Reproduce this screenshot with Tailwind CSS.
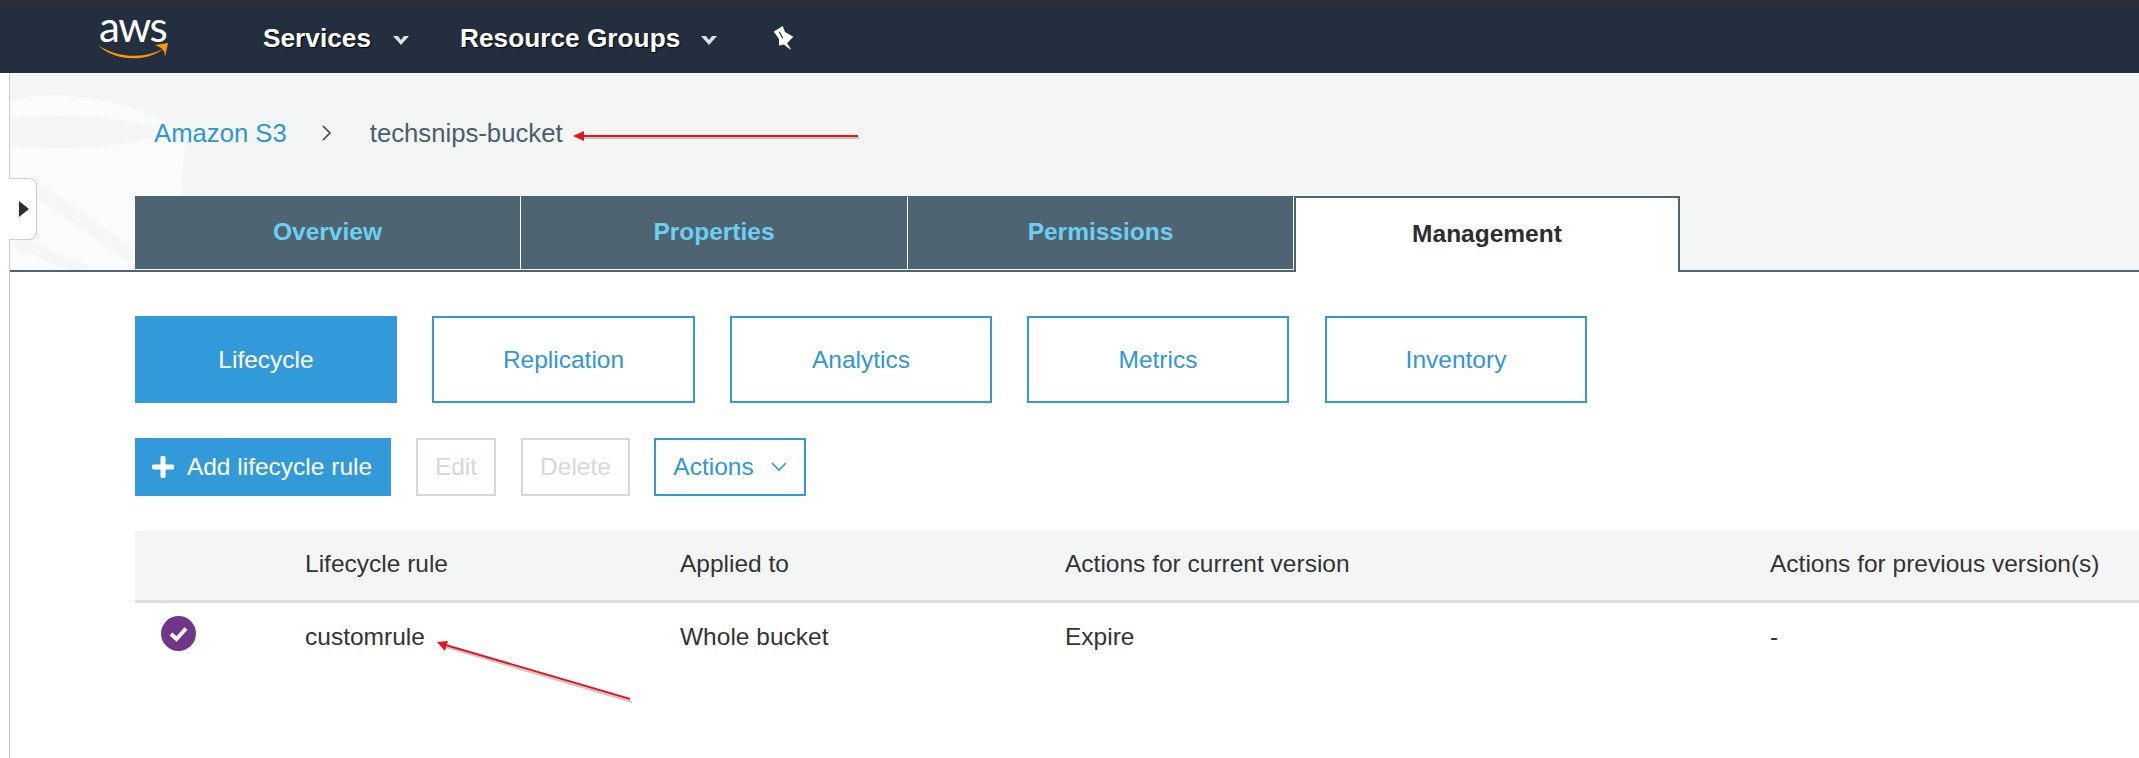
<!DOCTYPE html>
<html>
<head>
  <meta charset="UTF-8">
  <meta name="viewport" content="width=device-width, initial-scale=1.0">
  <script src="https://cdn.jsdelivr.net/npm/@tailwindcss/browser@4"></script>
  <title>techsnips-bucket - S3</title>
</head>
<body class="bg-white">
  <div class="relative w-[2139px] h-[758px] overflow-hidden flex flex-col bg-white font-['Liberation_Sans',Arial,sans-serif] text-[#333]">

    <!-- top nav -->
    <header class="h-[73px] shrink-0 flex items-center bg-[#232f3e] border-t-[3px] border-[#2f2f2f] text-white">
      <div class="relative w-[72px] h-[44px] ml-[97px]">
        <span class="absolute left-[2px] top-[-20px] font-['Lato',sans-serif] text-[42px] leading-[60px] tracking-[-1.5px]">aws</span>
        <svg class="absolute left-0 top-[26px]" width="72" height="19" viewBox="0 0 72 19">
          <path d="M1 3 C 18 15, 44 18, 66 7 C 50 20, 18 20, 1 3 Z" fill="#f90"/>
          <path d="M58 3 L71 1 L68 15 C 68 9, 66 6, 58 3 Z" fill="#f90"/>
        </svg>
      </div>
      <nav class="flex items-center font-bold text-[26.25px] [text-shadow:1px_1px_1px_#000]">
        <span class="ml-[94px] mt-px">Services</span>
        <svg class="ml-[22px] mt-[5px]" width="16" height="9" viewBox="0 0 16 9"><path d="M0 0 H5 L8 4 L11 0 H16 L8 9 Z" fill="#dfe2e2"/></svg>
        <span class="ml-[51px] mt-px">Resource Groups</span>
        <svg class="ml-[21px] mt-[5px]" width="16" height="9" viewBox="0 0 16 9"><path d="M0 0 H5 L8 4 L11 0 H16 L8 9 Z" fill="#dfe2e2"/></svg>
        <svg class="ml-[56px]" width="22" height="26" viewBox="0 0 22 26">
          <path d="M0.7 6.7 L9.7 1 L12 7 L20.3 11.7 L14 18.3 L18 24.3 L17 24.5 L11 19.5 L6 20.5 L6 14 L1 7 Z" fill="#fff"/>
          <path d="M6.3 6.7 L9.7 13.3" stroke="#232f3e" stroke-width="1.2"/>
        </svg>
      </nav>
    </header>

    <div class="flex-1 ml-[9px] border-l border-[#ccc] flex flex-col">
      <!-- bucket header -->
      <section class="relative h-[199px] shrink-0 bg-[#f4f6f6] flex flex-col overflow-hidden">
        <svg class="absolute left-0 top-0" width="200" height="199" viewBox="0 0 200 199">
          <path d="M0 27 C 30 20, 70 22, 100 29 C 140 38, 165 52, 175 70 L 165 199 L 0 199 Z" fill="#fafbfb"/>
          <ellipse cx="50" cy="59" rx="95" ry="16" fill="#f4f6f6"/>
          <path d="M25 115 L 125 185" stroke="#f5f6f6" stroke-width="14"/>
          <path d="M5 168 L 75 198" stroke="#f5f6f6" stroke-width="12"/>
        </svg>
        <div class="relative h-[123px] flex items-center text-[25.7px] pb-[3px] pl-[144px]">
          <a class="text-[#2f97d6]">Amazon S3</a>
          <svg class="ml-[34px]" width="12" height="18" viewBox="0 0 12 18"><path d="M2 2 L9 9 L2 16" fill="none" stroke="#444" stroke-width="1.6"/></svg>
          <span class="ml-[37px] text-[#485e6d]">techsnips-bucket</span>
        </div>
        <div class="relative flex-1 flex items-stretch pl-[125px] border-b-2 border-[#4f6473] font-bold text-[24.5px]">
          <div class="w-[386px] mb-px flex items-center justify-center bg-[#4f6473] text-[#6bd0ef] border-r border-white">Overview</div>
          <div class="w-[387px] mb-px flex items-center justify-center bg-[#4f6473] text-[#6bd0ef] border-r border-white">Properties</div>
          <div class="w-[386px] mb-px flex items-center justify-center bg-[#4f6473] text-[#6bd0ef] border-r border-white">Permissions</div>
          <div class="w-[386px] -mb-[2px] pb-[2px] flex items-center justify-center bg-white text-[#2d2d2d] border-2 border-b-0 border-[#4f6473]">Management</div>
        </div>
      </section>

      <!-- sub tabs -->
      <div class="flex pl-[125px] pt-[44px] gap-[35px] text-[24.5px] text-[#2f97d6]">
        <div class="w-[262px] h-[87px] pt-[2px] flex items-center justify-center bg-[#339ad9] text-white">Lifecycle</div>
        <div class="w-[263px] h-[87px] pt-[2px] flex items-center justify-center border-2 border-[#339ad9]">Replication</div>
        <div class="w-[262px] h-[87px] pt-[2px] flex items-center justify-center border-2 border-[#339ad9]">Analytics</div>
        <div class="w-[262px] h-[87px] pt-[2px] flex items-center justify-center border-2 border-[#339ad9]">Metrics</div>
        <div class="w-[262px] h-[87px] pt-[2px] ml-px flex items-center justify-center border-2 border-[#339ad9]">Inventory</div>
      </div>

      <!-- toolbar -->
      <div class="flex items-center pl-[125px] mt-[35px] text-[24.5px]">
        <button class="w-[256px] h-[58px] pr-[2px] flex items-center justify-center gap-[13px] bg-[#339ad9] text-white">
          <svg width="22" height="22" viewBox="0 0 22 22"><path d="M11 2 V20 M2 11 H20" stroke="#fff" stroke-width="5" stroke-linecap="round"/></svg>
          <span>Add lifecycle rule</span>
        </button>
        <button class="ml-[25px] w-[80px] h-[58px] flex items-center justify-center border-2 border-[#d5d8d8] text-[#d5d8d8]">Edit</button>
        <button class="ml-[25px] w-[109px] h-[58px] flex items-center justify-center border-2 border-[#d5d8d8] text-[#d5d8d8]">Delete</button>
        <button class="ml-[24px] w-[152px] h-[58px] flex items-center justify-center gap-[17px] border-2 border-[#339ad9] text-[#2f97d6]">
          <span>Actions</span>
          <svg width="16" height="10" viewBox="0 0 16 10"><path d="M1 1 L8 8 L15 1" fill="none" stroke="#2f97d6" stroke-width="1.6"/></svg>
        </button>
      </div>

      <!-- rules table -->
      <div class="ml-[125px] mt-[35px] text-[24.5px] text-[#333]">
        <div class="h-[72px] pb-[2px] grid grid-cols-[170px_375px_385px_705px_1fr] items-center bg-[#f4f6f6] border-b-[3px] border-[#ddd]">
          <span></span>
          <span>Lifecycle rule</span>
          <span>Applied to</span>
          <span>Actions for current version</span>
          <span>Actions for previous version(s)</span>
        </div>
        <div class="h-[70px] pb-[2px] grid grid-cols-[170px_375px_385px_705px_1fr] items-center">
          <span class="pl-[26px] mb-[8px]">
            <svg width="35" height="35" viewBox="0 0 35 35"><circle cx="17.5" cy="17.5" r="17.5" fill="#70368a"/><path d="M10 18 L15.5 23 L25 12.5" fill="none" stroke="#fff" stroke-width="4"/></svg>
          </span>
          <span>customrule</span>
          <span>Whole bucket</span>
          <span>Expire</span>
          <span>-</span>
        </div>
      </div>
    </div>

    <!-- sidebar toggle -->
    <div class="absolute left-[9px] top-[178px] w-[28px] h-[62px] flex items-center bg-white border border-l-0 border-[#ccc] rounded-r-lg">
      <svg class="ml-[10px]" width="10" height="16" viewBox="0 0 10 16"><path d="M0 0 L10 8 L0 16 Z" fill="#2d2d2d"/></svg>
    </div>

    <!-- red annotation arrows -->
    <svg class="absolute left-0 top-0 pointer-events-none" width="2139" height="758" viewBox="0 0 2139 758">
      <path d="M578 138 L859 138 M442 646 L632 702" stroke="#888" stroke-width="2" opacity="0.45"/>
      <path d="M578 136 L858 136" stroke="#e8141c" stroke-width="2"/>
      <path d="M573 136 L584 131 L584 141 Z" fill="#e8141c"/>
      <path d="M442 644 L630 699" stroke="#e8141c" stroke-width="2"/>
      <path d="M437 642 L448 641 L445 651 Z" fill="#e8141c"/>
    </svg>
  </div>
</body>
</html>
